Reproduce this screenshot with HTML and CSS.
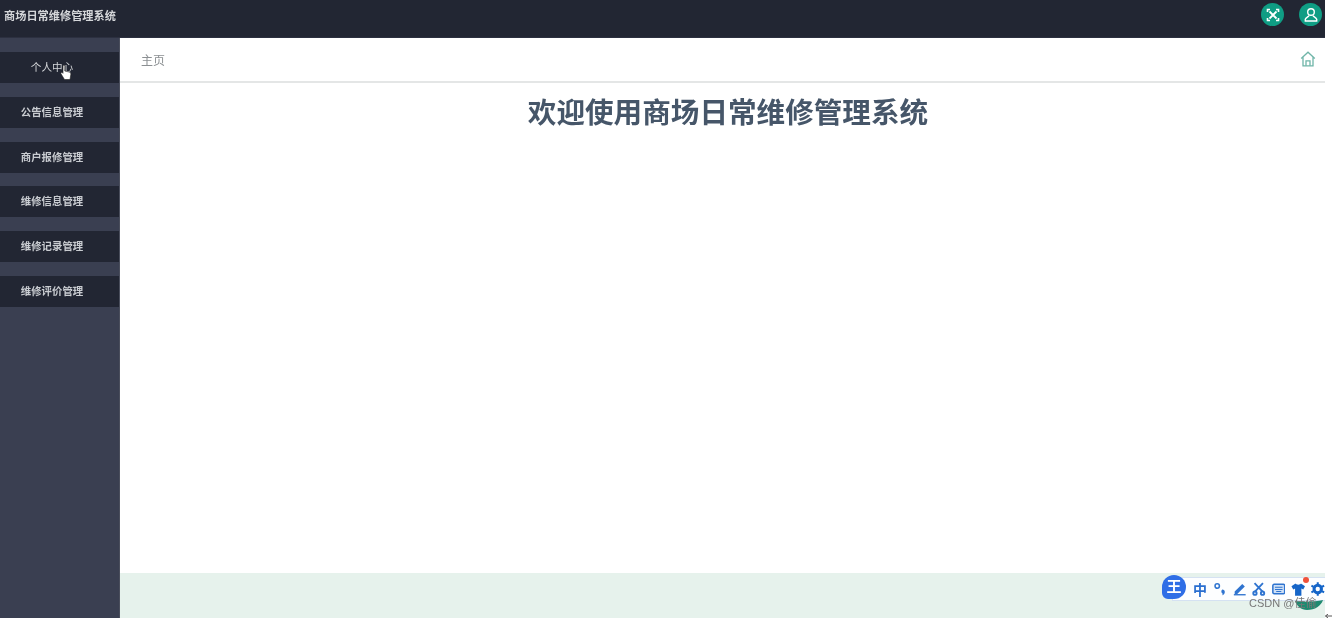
FILE: index.html
```html
<!DOCTYPE html>
<html lang="zh-CN">
<head>
    <meta charset="UTF-8">
    <meta name="viewport" content="width=device-width, initial-scale=1.0">
    <title>商场日常维修管理系统</title>
    <link rel="stylesheet" href="styles.css">
</head>
<body>
    <div class="app">
        <header class="topbar">
            <div class="brand">商场日常维修管理系统</div>
            <div class="top-actions">
                <span class="round-btn">
                    <svg viewBox="0 0 16 16" width="16" height="16" fill="none" stroke="#fff" stroke-width="1.8">
                        <path d="M4.500 4.500 11.500 11.500M11.500 4.500 4.500 11.500"/>
                        <path d="M2.500 5V2.500H5M11 2.500h2.500V5M13.500 11v2.500H11M5 13.500H2.500V11" stroke-width="1.600"/>
                    </svg>
                </span>
                <span class="round-btn">
                    <svg viewBox="0 0 16 16" width="16" height="16" fill="none" stroke="#fff" stroke-width="1.4">
                        <circle cx="8" cy="5" r="3.300"/>
                        <path d="M6 8.500C5.500 10 3 10.300 2.300 12.200V14h11.400v-1.800C13 10.300 10.500 10 10 8.500"/>
                    </svg>
                </span>
            </div>
        </header>
        <div class="body-row">
            <nav class="sidebar">
                <a class="nav-item nav-first">个人中心</a>
                <a class="nav-item">公告信息管理</a>
                <a class="nav-item">商户报修管理</a>
                <a class="nav-item">维修信息管理</a>
                <a class="nav-item">维修记录管理</a>
                <a class="nav-item">维修评价管理</a>
            </nav>
            <main class="content">
                <div class="crumb-bar">
                    <span class="crumb">主页</span>
                    <svg class="home-icon" viewBox="0 0 16 16" width="16" height="16" fill="none" stroke="#6fb5a8" stroke-width="1.300">
                        <path d="M1.200 7.500 8 1.200l6.800 6.300M3 6V14.800h10V6"/>
                        <path d="M6 14.800V9.800h4v5"/>
                    </svg>
                </div>
                <h1 class="welcome">欢迎使用商场日常维修管理系统</h1>
                <div class="footer-band"></div>
            </main>
        </div>

        <!-- 鼠标指针 -->
        <svg class="cursor" viewBox="0 0 12 16" width="12" height="16">
            <path d="M3 1.500c1-.6 1.800 0 1.800 1V7l4.200 1c1.500.4 2 1 1.800 2.500L10 15.500H4.500L1 9.800c-.6-1 .6-1.800 1.500-1L3 9.300z" fill="#fff" stroke="#222" stroke-width=".6"/>
        </svg>

        <!-- 输入法工具条 -->
        <div class="ime-bar">
            <span class="ime-logo">王</span>
            <span class="ime-zh">中</span>
            <svg viewBox="0 0 16 16" width="14" height="14" fill="#2f74d0"><circle cx="5" cy="4.500" r="2.600" fill="none" stroke="#2f74d0" stroke-width="1.800"/><path d="M11 8.500a3 3 0 0 1 3 3c0 2-1.500 3.500-3.500 4 .8-1 1-1.500 1-2a3 3 0 0 1-.5-5z"/></svg>
            <svg viewBox="0 0 16 16" width="14" height="14" fill="#2f74d0"><path d="M2 11 11 2l3 3-9 9H2z"/><rect x="1" y="14" width="14" height="1.600"/></svg>
            <svg viewBox="0 0 16 16" width="14" height="14" fill="none" stroke="#2f74d0" stroke-width="2.200"><path d="M3 1l9.500 10M13 1 3.500 11"/><circle cx="3.500" cy="13" r="2"/><circle cx="12.500" cy="13" r="2"/></svg>
            <svg viewBox="0 0 16 16" width="14" height="14" fill="#cfe0f6" stroke="#2f74d0" stroke-width="1.800"><rect x="1" y="2.500" width="14" height="11" rx="1.500"/><path d="M3.500 6h9M3.500 8.500h9M5 11h6" stroke-width="1.200"/></svg>
            <svg viewBox="0 0 16 16" width="15" height="15" fill="#1565c8"><path d="M5 1.500 0.500 4.500 2.500 8 4.500 7v8h7V7l2 1 2-3.500L11 1.500c-.5 1.500-5.500 1.500-6 0z"/></svg>
            <svg viewBox="0 0 16 16" width="14" height="14" fill="none" stroke="#1565c8" stroke-width="3.600"><circle cx="8" cy="8" r="4.400"/><path d="M8 0v3M8 13v3M0.500 4l2.500 1.500M13 10.500l2.500 1.500M0.500 12 3 10.500M13 5.500 15.500 4" stroke-width="2.400"/></svg>
            <span class="ime-dot"></span>
        </div>
        <svg class="leaf" viewBox="0 0 28 10" width="28" height="10"><path d="M0 1C8 2 20 2 28 0 26 6 20 10 12 10 6 10 2 6 0 1z" fill="#1f8a70"/></svg>
        <span class="watermark">CSDN @佳偷</span>
    </div>
    <svg class="edge-arrow" viewBox="0 0 7 4" width="7" height="4" fill="none" stroke="#555" stroke-width="1"><path d="M3 0 0.500 2 3 4M0.500 2H7"/></svg>
</body>
</html>
```

FILE: styles.css
```css
html, body {
    margin: 0;
    padding: 0;
    height: 618px;
    overflow: hidden;
    background-color: #fff;
}
body {
    font-family: "Liberation Sans", "Noto Sans CJK SC", sans-serif;
}
.app {
    position: relative;
    width: 1325px;
    height: 618px;
    display: flex;
    flex-direction: column;
    overflow: hidden;
    filter: blur(0.4px);
}
.topbar {
    height: 38px;
    flex-shrink: 0;
    display: flex;
    justify-content: space-between;
    padding: 0 3px 0 4px;
    box-sizing: border-box;
    background-color: #222633;
    border-bottom: 1px solid #2c3040;
}
.brand {
    color: #d5d7da;
    font-size: 11.2px;
    font-weight: bold;
    line-height: 32px;
}
.top-actions {
    display: flex;
    gap: 15px;
    padding-top: 3px;
}
.round-btn {
    width: 23px;
    height: 23px;
    border-radius: 50%;
    background-color: #0f9d84;
    display: flex;
    align-items: center;
    justify-content: center;
}
.body-row {
    flex: 1;
    display: flex;
    min-height: 0;
}
.sidebar {
    width: 120px;
    flex-shrink: 0;
    padding-top: 14px;
    display: flex;
    flex-direction: column;
    gap: 13.8px;
    box-sizing: border-box;
    background-color: #3a3f51;
    border-right: 1px solid #4a4e5c;
}
.nav-item {
    height: 31px;
    line-height: 31px;
    padding-right: 15px;
    text-align: center;
    font-size: 10.4px;
    font-weight: bold;
    color: #c9ccd1;
    background-color: #222633;
}
.nav-first {
    font-weight: normal;
    font-size: 10.6px;
    color: #d5d7da;
}
.content {
    flex: 1;
    display: flex;
    flex-direction: column;
    min-width: 0;
    background-color: #fff;
}
.crumb-bar {
    height: 45px;
    flex-shrink: 0;
    display: flex;
    align-items: center;
    justify-content: space-between;
    padding: 0 9px 0 21px;
    box-sizing: border-box;
    border-bottom: 2px solid #e4e6e6;
}
.crumb {
    color: #8b8f92;
    font-size: 12px;
}
.home-icon {
    margin-bottom: 1px;
}
.welcome {
    flex: 1;
    margin: 0;
    padding: 12px 0 0 11px;
    text-align: center;
    font-size: 28.6px;
    line-height: 36px;
    color: #465669;
}
.footer-band {
    height: 45px;
    flex-shrink: 0;
    background-color: #e6f2ec;
}
.cursor {
    position: absolute;
    left: 60px;
    top: 64px;
}
.ime-bar {
    position: absolute;
    left: 1172px;
    top: 577px;
    width: 153px;
    height: 24px;
    padding-left: 20px;
    box-sizing: border-box;
    display: flex;
    align-items: center;
    gap: 6px;
    background-color: #fdfeff;
    border: 1px solid #d5e2f2;
    border-right: none;
}
.ime-logo {
    position: absolute;
    left: -11px;
    top: -3px;
    width: 24px;
    height: 24px;
    border-radius: 50% 50% 50% 6px;
    background-color: #2f6ee6;
    color: #fff;
    font-size: 15px;
    font-weight: bold;
    line-height: 24px;
    text-align: center;
}
.ime-zh {
    width: 14px;
    color: #2a6fd0;
    font-size: 14px;
    font-weight: bold;
}
.ime-dot {
    position: absolute;
    left: 130px;
    top: -1px;
    width: 6px;
    height: 6px;
    border-radius: 50%;
    background-color: #f0523a;
}
.leaf {
    position: absolute;
    left: 1295px;
    top: 600px;
}
.watermark {
    position: absolute;
    left: 1249px;
    top: 596px;
    font-size: 11px;
    line-height: 14px;
    color: #777;
}
.edge-arrow {
    position: absolute;
    left: 1325px;
    top: 614px;
}
```
